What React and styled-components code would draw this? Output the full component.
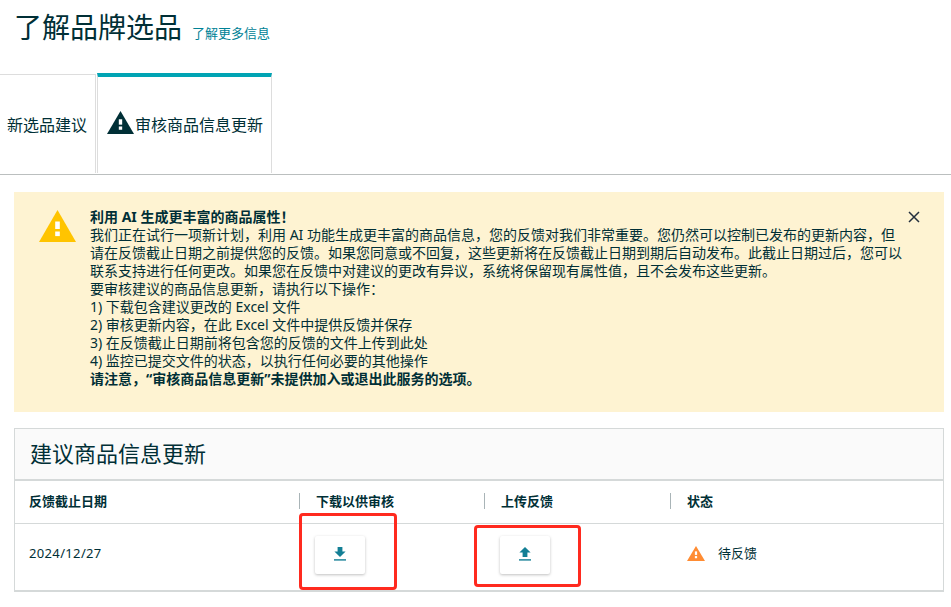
import React from 'react';
import styled, { createGlobalStyle } from 'styled-components';

const GlobalStyle = createGlobalStyle`
  html, body {
    margin: 0;
    padding: 0;
    background: #fff;
  }
  body {
    font-family: "Noto Sans", "Noto Sans CJK SC", sans-serif;
    color: #0f1111;
  }
`;

const alertLines = [
  '我们正在试行一项新计划，利用 AI 功能生成更丰富的商品信息，您的反馈对我们非常重要。您仍然可以控制已发布的更新内容，但',
  '请在反馈截止日期之前提供您的反馈。如果您同意或不回复，这些更新将在反馈截止日期到期后自动发布。此截止日期过后，您可以',
  '联系支持进行任何更改。如果您在反馈中对建议的更改有异议，系统将保留现有属性值，且不会发布这些更新。',
  '要审核建议的商品信息更新，请执行以下操作：',
  '1) 下载包含建议更改的 Excel 文件',
  '2) 审核更新内容，在此 Excel 文件中提供反馈并保存',
  '3) 在反馈截止日期前将包含您的反馈的文件上传到此处',
  '4) 监控已提交文件的状态，以执行任何必要的其他操作',
];

const WarningIcon = ({ size, height, color, mark = '#fff' }) => (
  <svg width={size} height={height} viewBox="0 0 37 32" preserveAspectRatio="none">
    <path d="M18.5 0 L37 32 H0 Z" fill={color} />
    <rect x="16.2" y="11.5" width="4.6" height="7.5" fill={mark} />
    <rect x="16.2" y="21.5" width="4.6" height="4.6" fill={mark} />
  </svg>
);

const DownloadIcon = () => (
  <svg width="12" height="14" viewBox="0 0 12 14">
    <path d="M3.6 0 H8.4 V4.5 H11.6 L6 10 L0.4 4.5 H3.6 Z" fill="#137f95" />
    <rect x="0" y="12.2" width="12" height="1.4" fill="#137f95" />
  </svg>
);

const UploadIcon = () => (
  <svg width="12" height="14" viewBox="0 0 12 14">
    <path d="M3.6 10 H8.4 V5.5 H11.6 L6 0 L0.4 5.5 H3.6 Z" fill="#137f95" />
    <rect x="0" y="12.2" width="12" height="1.4" fill="#137f95" />
  </svg>
);

const CloseIcon = () => (
  <svg width="12" height="12" viewBox="0 0 12 12">
    <path d="M1 1 L11 11 M11 1 L1 11" stroke="#232f3e" strokeWidth="1.5" fill="none" />
  </svg>
);

const Page = styled.div`
  position: relative;
  width: 951px;
  height: 607px;
  overflow: hidden;
`;

const TitleRow = styled.div`
  display: flex;
  align-items: baseline;
  gap: 10px;
  height: 73px;
  padding-left: 14px;
  box-sizing: border-box;
  padding-top: 7px;
`;

const Title = styled.h1`
  margin: 0;
  font-size: 28px;
  line-height: 40px;
  font-weight: 400;
  color: #002f36;
`;

const MoreLink = styled.a`
  font-size: 13px;
  color: #008296;
  text-decoration: none;
`;

const TabBar = styled.div`
  display: flex;
  height: 101px;
  border-bottom: 1px solid #bbbfbf;
  margin-bottom: 17px;
`;

const Tab = styled.div`
  display: flex;
  align-items: center;
  gap: 1px;
  box-sizing: border-box;
  font-size: 16px;
  color: #002f36;
  width: ${(p) => p.$width}px;
  padding-left: ${(p) => p.$pad}px;
  padding-bottom: ${(p) => (p.$active ? 2 : 0)}px;
  margin-right: ${(p) => (p.$active ? 0 : 1)}px;
  border-right: 1px solid #dddddd;
  border-top: ${(p) => (p.$active ? '4px solid #00a4b4' : '1px solid #dddddd')};
  margin-top: ${(p) => (p.$active ? 0 : 1)}px;
  height: ${(p) => (p.$active ? 100 : 99)}px;
  border-left: ${(p) => (p.$active ? '1px solid #dddddd' : 'none')};
`;

const TabIcon = styled.span`
  display: flex;
  margin-bottom: 3px;
`;

const Alert = styled.section`
  display: flex;
  box-sizing: border-box;
  width: 930px;
  height: 220px;
  margin: 0 0 16px 14px;
  padding: 16px 24px 0 25px;
  background: #fef3d2;
`;

const AlertIconSlot = styled.div`
  flex: 0 0 51px;
  padding-top: 2px;
`;

const AlertBody = styled.div`
  flex: 1;
  font-size: 14px;
  line-height: 18px;
  color: #002f36;
  white-space: nowrap;
`;

const AlertLine = styled.div`
  font-weight: ${(p) => (p.$bold ? 700 : 400)};
`;

const CloseButton = styled.button`
  flex: none;
  align-self: flex-start;
  display: flex;
  padding: 3px 0 0;
  border: 0;
  background: none;
`;

const Card = styled.section`
  box-sizing: border-box;
  width: 930px;
  height: 164px;
  margin-left: 14px;
  border: 1px solid #d5d9d9;
  border-bottom-width: 2px;
`;

const CardHeader = styled.h2`
  box-sizing: border-box;
  height: 52px;
  margin: 0;
  padding-left: 15px;
  background: #fafafa;
  border-bottom: 2px solid #d5d9d9;
  font-size: 22px;
  line-height: 48px;
  font-weight: 400;
  color: #002f36;
`;

const HeadRow = styled.div`
  display: grid;
  grid-template-columns: 284px 185px 186px 1fr;
  align-items: center;
  box-sizing: border-box;
  height: 43px;
  padding-bottom: 2px;
  border-bottom: 1px solid #d5d9d9;
`;

const BodyRow = styled.div`
  display: grid;
  grid-template-columns: 284px 185px 186px 1fr;
  align-items: center;
  box-sizing: border-box;
  height: 66px;
  padding-bottom: 4px;
`;

const HeadCell = styled.div`
  font-size: 13px;
  line-height: 16px;
  font-weight: 700;
  color: #002f36;
  padding-left: ${(p) => (p.$first ? 14 : 0)}px;
`;

const HeadLabel = styled.span`
  display: block;
  padding-left: ${(p) => (p.$first ? 0 : 16)}px;
  border-left: ${(p) => (p.$first ? 'none' : '1px solid #a9b4b7')};
`;

const Cell = styled.div`
  display: flex;
  align-items: center;
  gap: 13px;
  font-size: 13px;
  line-height: 18px;
  color: #002f36;
  padding-left: ${(p) => p.$pad}px;
  padding-bottom: ${(p) => (p.$text ? 4 : 0)}px;
`;

const DateText = styled.span`
  letter-spacing: 0.35px;
`;

const IconButton = styled.button`
  display: flex;
  align-items: center;
  justify-content: center;
  width: 50px;
  height: 38px;
  padding: 0 0 2px;
  border: 0;
  border-radius: 2px;
  background: #fff;
  box-shadow: 0 1px 3px rgba(0, 0, 0, 0.25);
`;

/* hand-drawn red marks that sit over the screenshot */
const RedMark = styled.div`
  position: absolute;
  box-sizing: border-box;
  left: ${(p) => p.$x}px;
  top: ${(p) => p.$y}px;
  width: ${(p) => p.$w}px;
  height: ${(p) => p.$h}px;
  border: 3px solid #ff2a1f;
  border-radius: 4px;
`;

const App = () => {
  return (
    <Page>
      <GlobalStyle />
      <TitleRow>
        <Title>了解品牌选品</Title>
        <MoreLink href="#">了解更多信息</MoreLink>
      </TitleRow>

      <TabBar>
        <Tab $width={96} $pad={7}>新选品建议</Tab>
        <Tab $active $width={175} $pad={9}>
          <TabIcon>
            <WarningIcon size={27} height={23} color="#002f36" />
          </TabIcon>
          审核商品信息更新
        </Tab>
      </TabBar>

      <Alert>
        <AlertIconSlot>
          <WarningIcon size={37} height={32} color="#ffc400" />
        </AlertIconSlot>
        <AlertBody>
          <AlertLine $bold>利用 AI 生成更丰富的商品属性！</AlertLine>
          {alertLines.map((line) => (
            <AlertLine key={line}>{line}</AlertLine>
          ))}
          <AlertLine $bold>请注意，“审核商品信息更新”未提供加入或退出此服务的选项。</AlertLine>
        </AlertBody>
        <CloseButton>
          <CloseIcon />
        </CloseButton>
      </Alert>

      <Card>
        <CardHeader>建议商品信息更新</CardHeader>
        <HeadRow>
          <HeadCell $first><HeadLabel $first>反馈截止日期</HeadLabel></HeadCell>
          <HeadCell><HeadLabel>下载以供审核</HeadLabel></HeadCell>
          <HeadCell><HeadLabel>上传反馈</HeadLabel></HeadCell>
          <HeadCell><HeadLabel>状态</HeadLabel></HeadCell>
        </HeadRow>
        <BodyRow>
          <Cell $pad={14} $text><DateText>2024/12/27</DateText></Cell>
          <Cell $pad={16}>
            <IconButton><DownloadIcon /></IconButton>
          </Cell>
          <Cell $pad={16}>
            <IconButton><UploadIcon /></IconButton>
          </Cell>
          <Cell $pad={17} $text>
            <WarningIcon size={18} height={15} color="#ff8c33" />
            待反馈
          </Cell>
        </BodyRow>
      </Card>

      <RedMark $x={299} $y={513} $w={98} $h={77} />
      <RedMark $x={474} $y={525} $w={107} $h={62} />
    </Page>
  );
};

export default App;
